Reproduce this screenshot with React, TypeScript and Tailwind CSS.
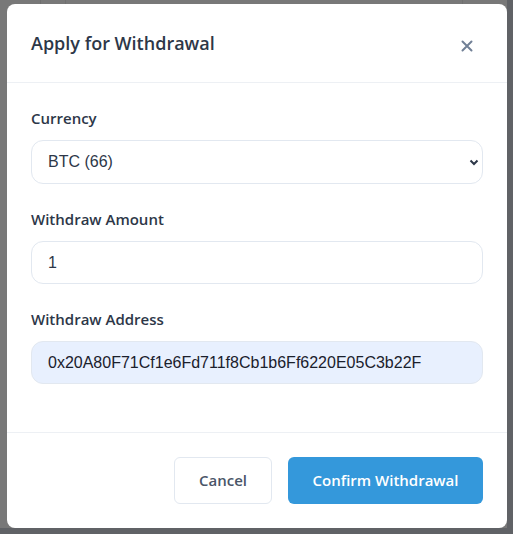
import React from "react";

export default function App() {
  return (
    <div className="relative h-[534px] w-[513px] overflow-hidden bg-[#606266]">
      <div className="absolute inset-x-0 top-0 h-[528px] w-[507px] bg-[#787878]">
        <div className="absolute left-[40px] top-0 h-full w-px bg-[#6e6e6e]" />
        <div className="absolute left-[65px] top-0 h-full w-px bg-[#707070]" />
        <div className="absolute left-[462px] top-0 h-full w-px bg-[#707070]" />
      </div>
      <div
        className="absolute left-[7px] top-[4px] flex h-[524px] w-[500px] flex-col rounded-lg bg-white"
        style={{ fontFamily: '"Open Sans", "Noto Sans", sans-serif' }}
      >
        <div className="flex h-[79px] items-center justify-between border-b border-[#edf0f4] px-6">
          <h2 className="text-[18px] font-semibold text-[#2d3748]">Apply for Withdrawal</h2>
          <button className="mr-[6px] mt-[6px] flex h-5 w-5 items-center justify-center text-[#718096]">
            <svg width="12" height="12" viewBox="0 0 12 12" fill="none" stroke="currentColor" strokeWidth="2" strokeLinecap="round">
              <path d="M1.5 1.5l9 9M10.5 1.5l-9 9" />
            </svg>
          </button>
        </div>
        <div className="flex flex-1 flex-col gap-6 px-6 pt-6">
          <div className="flex flex-col gap-[11px]">
            <label className="text-[15px] font-semibold leading-[22px] text-[#2d3748]">Currency</label>
            <div className="relative flex h-[44px] items-center rounded-xl border border-[#e2e8f0] px-4">
              <span className="text-[16px] text-[#2d3748]" style={{ fontFamily: '"Liberation Sans", Arial, sans-serif' }}>
                BTC (66)
              </span>
              <svg className="absolute right-[3px] top-[18px]" width="10" height="7" viewBox="0 0 10 7" fill="none" stroke="#2d3748" strokeWidth="2">
                <path d="M1.5 1.5l3.5 3.5 3.5-3.5" />
              </svg>
            </div>
          </div>
          <div className="flex flex-col gap-[11px]">
            <label className="text-[15px] font-semibold leading-[22px] text-[#2d3748]">Withdraw Amount</label>
            <div className="flex h-[43px] items-center rounded-xl border border-[#e2e8f0] px-4">
              <span className="text-[16px] text-[#2d3748]" style={{ fontFamily: '"Liberation Sans", Arial, sans-serif' }}>
                1
              </span>
            </div>
          </div>
          <div className="flex flex-col gap-[11px]">
            <label className="text-[15px] font-semibold leading-[22px] text-[#2d3748]">Withdraw Address</label>
            <div className="flex h-[43px] items-center rounded-xl border border-[#e2e8f0] bg-[#e8f0fe] px-4">
              <span className="text-[16px] text-[#1a202c]" style={{ fontFamily: '"Liberation Sans", Arial, sans-serif' }}>
                0x20A80F71Cf1e6Fd711f8Cb1b6Ff6220E05C3b22F
              </span>
            </div>
          </div>
        </div>
        <div className="flex h-[96px] items-start justify-end gap-4 border-t border-[#edf0f4] px-6 pt-6">
          <button className="h-[47px] w-[98px] rounded-md border border-[#e2e8f0] bg-white text-[15px] font-semibold text-[#4a5568]">
            Cancel
          </button>
          <button className="h-[47px] w-[195px] rounded-md bg-[#3498db] text-[15px] font-semibold text-white">
            Confirm Withdrawal
          </button>
        </div>
      </div>
    </div>
  );
}
